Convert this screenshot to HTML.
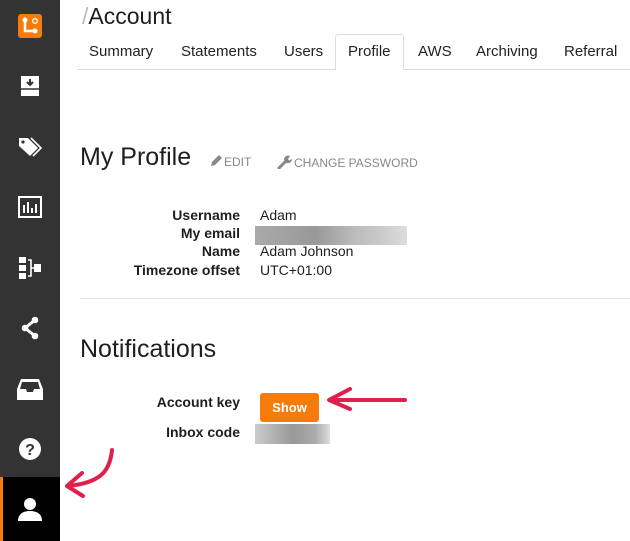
<!DOCTYPE html>
<html><head><style>
*{margin:0;padding:0;box-sizing:border-box}
body{width:630px;height:541px;overflow:hidden;background:#fff;font-family:"Liberation Sans",sans-serif;color:#1e1e1e;position:relative}
.sb{position:absolute;left:0;top:0;width:60px;height:541px;background:#333}
.ic{position:absolute;left:0;width:60px;height:40px;display:flex;align-items:center;justify-content:center}
.a{position:absolute;white-space:nowrap}
.lbl{position:absolute;right:390px;font-weight:bold;font-size:14px;text-align:right;white-space:nowrap}
.val{position:absolute;left:260px;font-size:14px;white-space:nowrap}
.tab{position:absolute;top:43px;font-size:15px;color:#222}
</style></head><body>
<div class="sb">
 <div class="ic" style="top:6px"><svg width="24" height="24"><rect width="24" height="24" rx="3" fill="#f57c0a"/><path d="M7 5v12h10" stroke="#fff" stroke-width="2.5" fill="none"/><circle cx="7" cy="6" r="2.5" fill="#fff"/><circle cx="17" cy="17" r="2.5" fill="#fff"/><circle cx="17" cy="7" r="2.3" stroke="#fff" stroke-width="1.3" fill="none"/></svg></div>
 <div class="ic" style="top:66px"><svg width="24" height="24"><path d="M3 2h18v20H3z" fill="#fff"/><path d="M3 15h18" stroke="#333" stroke-width="1.5"/><path d="M12 5v6M9 8l3 3 3-3" stroke="#333" stroke-width="2" fill="none"/></svg></div>
 <div class="ic" style="top:127px"><svg width="26" height="24"><path d="M2 3h9l10 10-8 8L2 11z" fill="#fff"/><circle cx="6" cy="7" r="1.6" fill="#333"/><path d="M14 3l10 10-8 8" stroke="#fff" stroke-width="1.6" fill="none"/></svg></div>
 <div class="ic" style="top:187px"><svg width="24" height="22"><rect x="1" y="1" width="22" height="20" fill="none" stroke="#fff" stroke-width="2"/><path d="M5 17V9h2v8zm4 0V6h2v11zm4 0v-5h2v5zm4 0V8h2v9z" fill="#fff"/></svg></div>
 <div class="ic" style="top:248px"><svg width="24" height="24"><rect x="1" y="1" width="7" height="6" fill="#fff"/><rect x="1" y="9" width="7" height="6" fill="#fff"/><rect x="1" y="17" width="7" height="6" fill="#fff"/><path d="M10 4h3v16h-3M13 12h3" stroke="#fff" stroke-width="1.6" fill="none"/><rect x="16" y="8" width="7" height="8" fill="#fff"/></svg></div>
 <div class="ic" style="top:308px"><svg width="20" height="24"><path d="M15 4L5 12l10 8" stroke="#fff" stroke-width="3" fill="none"/><circle cx="15" cy="4" r="3.3" fill="#fff"/><circle cx="5" cy="12" r="3.3" fill="#fff"/><circle cx="15" cy="20" r="3.3" fill="#fff"/></svg></div>
 <div class="ic" style="top:369px"><svg width="26" height="22"><path d="M4 1h18l4 10v11H0V11z" fill="#fff"/><path d="M5 4h16l2 7h-6l-1 3h-6l-1-3H3z" fill="#333"/></svg></div>
 <div class="ic" style="top:429px"><svg width="24" height="24"><circle cx="12" cy="12" r="11" fill="#fff"/><text x="12" y="18" text-anchor="middle" font-family="Liberation Sans" font-weight="bold" font-size="16" fill="#333">?</text></svg></div>
 <div style="position:absolute;top:477px;left:0;width:60px;height:64px;background:#000;border-left:3px solid #f57c0a"></div>
 <div class="ic" style="top:489px"><svg width="26" height="26"><circle cx="13" cy="8" r="6" fill="#fff"/><path d="M1 25c0-7 5-10 12-10s12 3 12 10z" fill="#fff"/></svg></div>
</div>

<div class="a" style="left:82px;top:3px;font-size:23px"><span style="color:#bbb">/</span>Account</div>
<div style="position:absolute;left:77px;top:69px;width:553px;height:1px;background:#ddd"></div>
<div style="position:absolute;left:335px;top:34px;width:69px;height:36px;background:#fff;border:1px solid #ddd;border-bottom:none;border-radius:3px 3px 0 0"></div>
<div class="tab" style="left:89px">Summary</div>
<div class="tab" style="left:181px">Statements</div>
<div class="tab" style="left:284px">Users</div>
<div class="tab" style="left:348px">Profile</div>
<div class="tab" style="left:418px">AWS</div>
<div class="tab" style="left:476px">Archiving</div>
<div class="tab" style="left:564px">Referral</div>

<div class="a" style="left:80px;top:143px;font-size:25px">My Profile</div>
<div class="a" style="left:210px;top:155px;font-size:12px;color:#888"><svg width="14" height="12" style="vertical-align:-1px"><path d="M1 11l1-4 7-7 3 3-7 7z" fill="#888"/></svg>EDIT</div>
<div class="a" style="left:277px;top:155px;font-size:12px;color:#888"><svg width="17" height="14" style="vertical-align:-2px"><path d="M2 13l7-7" stroke="#888" stroke-width="3" stroke-linecap="round"/><path d="M8 7a4 4 0 0 1 5-6l-2 3 1 1.5 3-1.5a4 4 0 0 1-5 4z" fill="#888"/></svg>CHANGE PASSWORD</div>

<div class="lbl" style="top:207px">Username</div><div class="val" style="top:207px">Adam</div>
<div class="lbl" style="top:225px">My email</div>
<div style="position:absolute;left:255px;top:226px;width:152px;height:19px;background:linear-gradient(90deg,#aaa,#999 40%,#bbb 65%,#ccc 85%,#ddd)"></div>
<div class="lbl" style="top:243px">Name</div><div class="val" style="top:243px">Adam Johnson</div>
<div class="lbl" style="top:262px">Timezone offset</div><div class="val" style="top:262px">UTC+01:00</div>
<div style="position:absolute;left:80px;top:298px;width:550px;height:1px;background:#e3e3e3"></div>

<div class="a" style="left:80px;top:335px;font-size:25px">Notifications</div>
<div class="lbl" style="top:394px">Account key</div>
<div style="position:absolute;left:260px;top:393px;width:59px;height:29px;background:#f57c0a;border-radius:3px;color:#fff;font-weight:bold;font-size:13px;text-align:center;line-height:29px">Show</div>
<div class="lbl" style="top:424px">Inbox code</div>
<div style="position:absolute;left:255px;top:424px;width:75px;height:20px;background:linear-gradient(90deg,#ccc,#999 50%,#aaa 80%,#ddd)"></div>

<svg style="position:absolute;left:0;top:0" width="630" height="541">
<path d="M405 400H330M350 389l-21 11 21 9" stroke="#e0204a" stroke-width="4" fill="none" stroke-linecap="round" stroke-linejoin="round"/>
<path d="M112 450c-2 20-10 33-45 36M82 473l-15 13 16 10" stroke="#e0204a" stroke-width="4" fill="none" stroke-linecap="round" stroke-linejoin="round"/>
</svg>
</body></html>
